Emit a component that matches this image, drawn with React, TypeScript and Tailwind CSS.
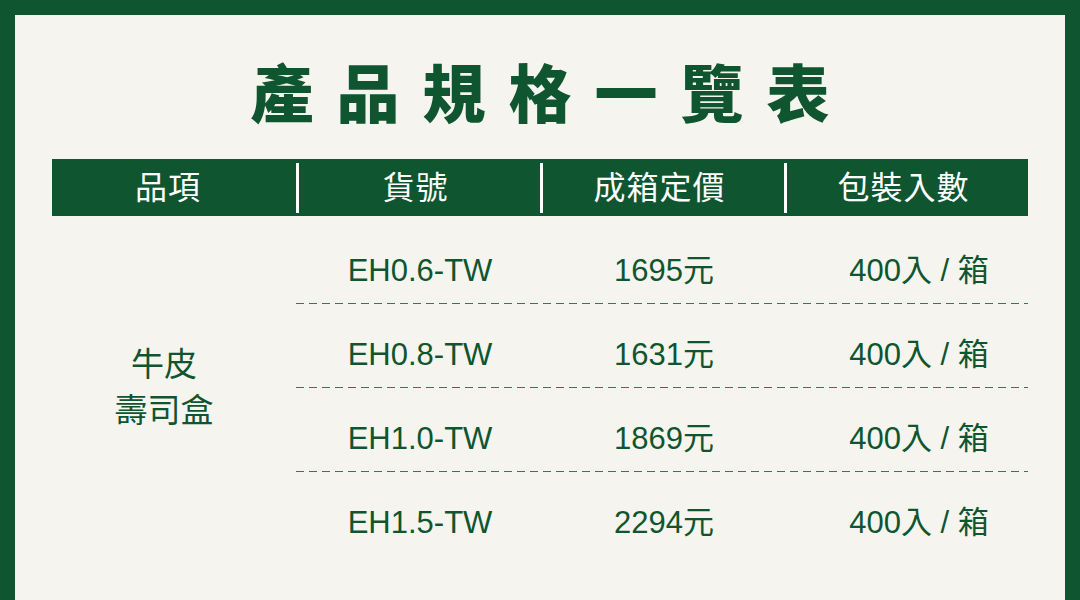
const rows = [
  { code: "EH0.6-TW", price: "1695元", pack: "400入 / 箱" },
  { code: "EH0.8-TW", price: "1631元", pack: "400入 / 箱" },
  { code: "EH1.0-TW", price: "1869元", pack: "400入 / 箱" },
  { code: "EH1.5-TW", price: "2294元", pack: "400入 / 箱" },
];

const headers = ["品項", "貨號", "成箱定價", "包裝入數"];

const cjk = "font-['Liberation_Sans','Noto_Sans_CJK_TC',sans-serif]";

export default function App() {
  return (
    <div className="w-[1080px] h-[600px] bg-[#0f5530] pt-[15px] px-[15px] overflow-hidden">
      <div className="h-full bg-[#f5f4ef] pt-[49px]">
        <h1
          className={`text-center text-[63px] leading-none font-black tracking-[23px] pl-[23px] text-[#0f5530] ${cjk}`}
        >
          產品規格一覽表
        </h1>

        <div className="mx-[37px] mt-[32px]">
          {/* header bar */}
          <div className="grid grid-cols-4 h-[57px] bg-[#0f5530] items-center">
            {headers.map((h, i) => (
              <div
                key={h}
                className={`h-[50px] flex items-center justify-center text-white text-[32px] tracking-[1px] font-normal ${cjk} ${
                  i > 0 ? "border-l-[3px] border-white pr-[8px]" : "pr-[12px]"
                }`}
              >
                {h}
              </div>
            ))}
          </div>

          {/* body */}
          <div className="flex pt-[4px]">
            <div
              className={`w-[244px] pr-[20px] flex flex-col items-center justify-center text-[33px] leading-[46px] text-[#0f5530] ${cjk}`}
            >
              <span>牛皮</span>
              <span>壽司盒</span>
            </div>
            <div className="flex-1">
              {rows.map((r, i) => (
                <div key={r.code}>
                  <div
                    className={`grid grid-cols-3 pt-[36px] pb-[17px] text-[31px] leading-[30px] text-[#0f5530] ${cjk}`}
                  >
                    <div className="text-center pl-[4px]">{r.code}</div>
                    <div className="text-center pl-[4px]">{r.price}</div>
                    <div className="text-center pl-[26px]">{r.pack}</div>
                  </div>
                  {i < rows.length - 1 && (
                    <div className="h-px bg-[repeating-linear-gradient(90deg,#2f7a52_0_8px,transparent_8px_13px)]" />
                  )}
                </div>
              ))}
            </div>
          </div>
        </div>
      </div>
    </div>
  );
}
